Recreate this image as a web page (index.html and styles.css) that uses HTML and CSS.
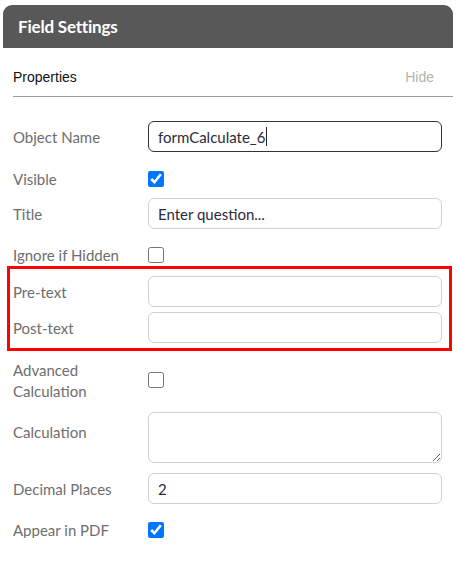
FILE: index.html
```html
<!DOCTYPE html>
<html lang="en">
<head>
<meta charset="utf-8">
<title>Field Settings</title>
<link rel="stylesheet" href="styles.css">
</head>
<body>
<div class="panel">
  <div class="header">Field Settings</div>
  <div class="body">
    <div class="props-head">
      <span class="props-title">Properties</span>
      <span class="hide">Hide</span>
    </div>

    <div class="row row-object">
      <span class="label">Object Name</span>
      <div class="input focused"><span>formCalculate_6</span><span class="caret"></span></div>
    </div>

    <div class="row row-check row-visible">
      <span class="label">Visible</span>
      <input type="checkbox" class="check" checked>
    </div>

    <div class="row row-title">
      <span class="label">Title</span>
      <input type="text" class="input" value="Enter question...">
    </div>

    <div class="row row-check row-ignore">
      <span class="label">Ignore if Hidden</span>
      <input type="checkbox" class="check">
    </div>

    <div class="highlight">
      <div class="row">
        <span class="label">Pre-text</span>
        <input type="text" class="input">
      </div>
      <div class="row row-post">
        <span class="label">Post-text</span>
        <input type="text" class="input">
      </div>
    </div>

    <div class="row row-advanced">
      <span class="label">Advanced<br>Calculation</span>
      <input type="checkbox" class="check">
    </div>

    <div class="row row-calc">
      <span class="label">Calculation</span>
      <textarea class="input textarea"></textarea>
    </div>

    <div class="row row-decimal">
      <span class="label">Decimal Places</span>
      <input type="text" class="input" value="2">
    </div>

    <div class="row row-check row-pdf">
      <span class="label">Appear in PDF</span>
      <input type="checkbox" class="check" checked>
    </div>
  </div>
</div>
</body>
</html>
```

FILE: styles.css
```css
* { box-sizing: border-box; }

body {
  margin: 0;
  background: #ffffff;
  font-family: Lato, "Noto Sans", sans-serif;
}

.panel {
  margin: 5px 0 0 3px;
  width: 450px;
}

.header {
  height: 43px;
  background: #585858;
  border-radius: 9px 9px 0 0;
  padding-left: 15px;
  display: flex;
  align-items: center;
  color: #ffffff;
  font-weight: 700;
  font-size: 17px;
  letter-spacing: -0.2px;
}

.body {
  padding-left: 10px;
}

.props-head {
  height: 49px;
  padding: 21px 19px 0 0;
  display: flex;
  justify-content: space-between;
  align-items: flex-start;
  border-bottom: 1px solid #9d9d9d;
  font-family: "Liberation Sans", Arial, sans-serif;
  font-size: 14px;
  line-height: 16px;
}

.props-title { color: #111111; }
.hide { color: #b3b3b3; }

.row {
  display: flex;
  align-items: center;
  width: 429px;
}

.label {
  width: 135px;
  flex: none;
  padding-top: 1px;
  color: #6e6e6e;
  font-size: 15px;
  line-height: 21px;
}

.input {
  width: 294px;
  height: 31px;
  margin: 0;
  padding: 0 9px;
  border: 1px solid #d2d2d2;
  border-radius: 6px;
  background: #ffffff;
  font-family: Lato, "Noto Sans", sans-serif;
  font-size: 15px;
  color: #2b2b3a;
  outline: none;
  display: flex;
  align-items: center;
}

.input.focused {
  border-color: #333333;
}

.caret {
  display: inline-block;
  width: 1px;
  height: 19px;
  margin-left: 1px;
  background: #222222;
}

.check {
  width: 16px;
  height: 16px;
  margin: 0;
  accent-color: #0075ff;
}

.row-object { margin-top: 24px; height: 31px; }
.row-check { height: 16px; }
.row-visible { margin-top: 19px; }
.row-title { margin-top: 11px; }
.row-ignore { margin-top: 18px; }

.highlight {
  margin: 3px 0 0 -6px;
  width: 445px;
  border: 3px solid #ff0000;
  padding: 7px 0 5px 3px;
}

.row-post { margin-top: 5px; }

.row-advanced { margin-top: 8px; height: 42px; }
.row-advanced .label { padding-top: 1px; }

.row-calc {
  margin-top: 11px;
  align-items: flex-start;
}
.row-calc .label { padding-top: 10px; }
.textarea {
  height: 51px;
  resize: vertical;
  display: block;
}

.row-decimal { margin-top: 10px; }
.row-pdf { margin-top: 18px; }
```
